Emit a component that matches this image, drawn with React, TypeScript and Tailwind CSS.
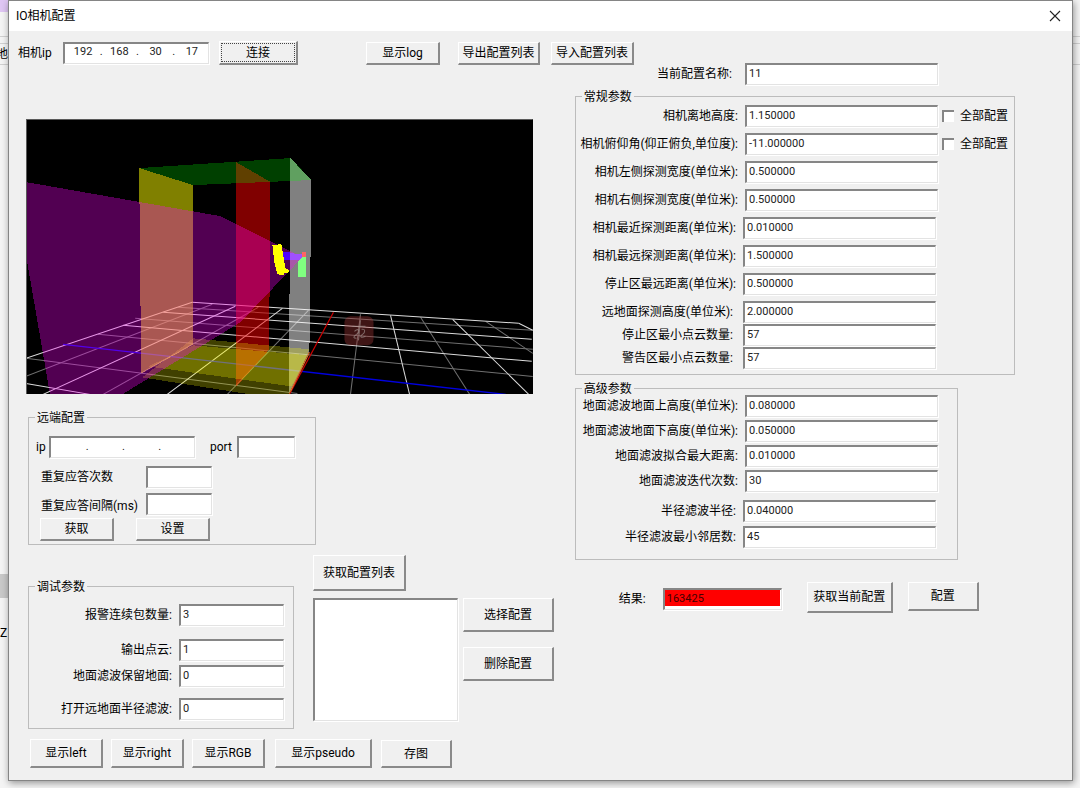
import React, { ReactNode } from 'react';
import clsx from 'clsx';

const bevelIn =
  'bg-white border-t-2 border-l-2 border-r border-b border-t-[#868686] border-l-[#868686] border-r-[#e3e3e3] border-b-[#e3e3e3] shadow-[1px_1px_0_#fff] rounded-none outline-none';

interface BevelButtonProps {
  children: ReactNode;
  className?: string;
  focused?: boolean;
}

function BevelButton({ children, className, focused }: BevelButtonProps) {
  return (
    <button
      type="button"
      className={clsx(
        'shrink-0 whitespace-nowrap bg-[#f0f0f0] p-px text-center border-t border-l border-r-2 border-b-2 border-t-white border-l-white border-r-[#8a8a8a] border-b-[#8a8a8a]',
        className
      )}
    >
      {focused ? (
        <span className="flex h-full items-center justify-center border border-dotted border-[#444]">
          {children}
        </span>
      ) : (
        children
      )}
    </button>
  );
}

interface TextBoxProps {
  id: string;
  value?: string;
  className?: string;
}

function TextBox({ id, value = '', className }: TextBoxProps) {
  return (
    <input
      id={id}
      type="text"
      defaultValue={value}
      className={clsx('h-[22px] min-w-0 pb-0.5 pl-0.5 text-[11px] text-[#222]', bevelIn, className)}
    />
  );
}

interface IpBoxProps {
  id: string;
  parts: string[];
}

function IpBox({ id, parts }: IpBoxProps) {
  return (
    <div className={clsx('flex h-[22px] w-[146px] items-center pb-0.5 pl-0.5 text-[11px] text-[#222]', bevelIn)}>
      {parts.map((part, i) => (
        <React.Fragment key={i}>
          {i > 0 && <span className="w-1 text-center">.</span>}
          <input
            id={i === 0 ? id : undefined}
            aria-label={`ip ${i + 1}`}
            type="text"
            defaultValue={part}
            className="w-0 min-w-0 flex-1 bg-transparent text-center outline-none"
          />
        </React.Fragment>
      ))}
    </div>
  );
}

interface GroupBoxProps {
  title: string;
  className?: string;
  children: ReactNode;
}

function GroupBox({ title, className, children }: GroupBoxProps) {
  return (
    <fieldset className={clsx('min-w-0 border border-[#bcbcbc]', className)}>
      <legend className="ml-1.5 h-4 px-0.5 leading-[18px]">{title}</legend>
      {children}
    </fieldset>
  );
}

interface Param {
  id: string;
  label: string;
  value: string;
  all?: boolean;
}

function ParamRow({ param, labelGap = 'pr-[7px]' }: { param: Param; labelGap?: string }) {
  return (
    <div className="flex h-[22px] items-center">
      <label htmlFor={param.id} className={clsx('flex-1 whitespace-nowrap text-right', labelGap)}>
        {param.label}
      </label>
      <TextBox id={param.id} value={param.value} className="w-[193px]" />
      <div className="flex w-[76px] items-center gap-1.5 pl-1">
        {param.all && (
          <>
            <input
              id={`${param.id}-all`}
              type="checkbox"
              className="size-3 appearance-none border-t-2 border-l-2 border-t-[#868686] border-l-[#868686] bg-white"
            />
            <label htmlFor={`${param.id}-all`}>全部配置</label>
          </>
        )}
      </div>
    </div>
  );
}

const cameraParams: Param[] = [
  { id: 'height', label: '相机离地高度:', value: '1.150000', all: true },
  { id: 'pitch', label: '相机俯仰角(仰正俯负,单位度):', value: '-11.000000', all: true },
  { id: 'left-width', label: '相机左侧探测宽度(单位米):', value: '0.500000' },
  { id: 'right-width', label: '相机右侧探测宽度(单位米):', value: '0.500000' }
];

const distanceParams: Param[] = [
  { id: 'near', label: '相机最近探测距离(单位米):', value: '0.010000' },
  { id: 'far', label: '相机最远探测距离(单位米):', value: '1.500000' },
  { id: 'stop-far', label: '停止区最远距离(单位米):', value: '0.500000' }
];

const zoneParams: Param[] = [
  { id: 'far-ground', label: '远地面探测高度(单位米):', value: '2.000000' },
  { id: 'stop-points', label: '停止区最小点云数量:', value: '57' },
  { id: 'warn-points', label: '警告区最小点云数量:', value: '57' }
];

const groundParams: Param[] = [
  { id: 'ground-up', label: '地面滤波地面上高度(单位米):', value: '0.080000' },
  { id: 'ground-down', label: '地面滤波地面下高度(单位米):', value: '0.050000' },
  { id: 'fit-distance', label: '地面滤波拟合最大距离:', value: '0.010000' },
  { id: 'iterations', label: '地面滤波迭代次数:', value: '30' }
];

const radiusParams: Param[] = [
  { id: 'radius', label: '半径滤波半径:', value: '0.040000' },
  { id: 'neighbours', label: '半径滤波最小邻居数:', value: '45' }
];

const debugParams = [
  { id: 'alarm-count', label: '报警连续包数量:', value: '3', gap: 'mt-[10px]' },
  { id: 'output-cloud', label: '输出点云:', value: '1', gap: 'mt-[13px]' },
  { id: 'keep-ground', label: '地面滤波保留地面:', value: '0', gap: 'mt-1' },
  { id: 'far-radius', label: '打开远地面半径滤波:', value: '0', gap: 'mt-[11px]' }
];

// [x1, y1, x2, y2]
const majorLines = [
  [192, 302, 518, 323],
  [163, 312, 531, 339],
  [123, 325, 531, 361],
  [26, 383, 90, 394],
  [192, 302, 26, 358],
  [235, 306, 43, 394],
  [282, 308, 167, 394],
  [390, 315, 409, 394],
  [452, 319, 528, 394],
  [518, 323, 532, 330]
];

const minorLines = [
  [178, 307, 532, 330],
  [135, 318, 532, 349],
  [98, 334, 532, 376],
  [26, 358, 297, 393],
  [212, 304, 26, 376],
  [258, 307, 103, 394],
  [308, 310, 227, 394],
  [360, 314, 350, 394],
  [420, 317, 469, 394],
  [485, 321, 532, 353]
];

function CloudView() {
  return (
    <svg viewBox="26 119 506 275" className="block w-full bg-black" role="img" aria-label="点云">
      <g strokeWidth="1">
        {minorLines.map(([x1, y1, x2, y2], i) => (
          <line key={i} x1={x1} y1={y1} x2={x2} y2={y2} stroke="#707070" />
        ))}
        {majorLines.map(([x1, y1, x2, y2], i) => (
          <line key={i} x1={x1} y1={y1} x2={x2} y2={y2} stroke="#dcdcdc" />
        ))}
        <line x1="63" y1="344" x2="505" y2="394" stroke="#0000e0" strokeWidth="1.4" />
        <line x1="333" y1="312" x2="289" y2="394" stroke="#d00000" strokeWidth="1.2" />
      </g>
      <g shapeRendering="crispEdges">
        <polygon points="139,168 193,185 193,344 141,373" fill="#ff0" fillOpacity=".5" />
        <polygon points="235.5,162 269.5,181.5 269,349 236,386" fill="#f00" fillOpacity=".5" />
        <polygon points="290,158 311,180 309,351 288.5,393" fill="#fff" fillOpacity=".5" />
        <polygon points="139,168 290.5,158 311,180 193,185" fill="#0f0" fillOpacity=".25" />
        <polygon points="193,338 309,349 289,394 250,394 142,377" fill="#ff0" fillOpacity=".25" />
        <polygon points="193,345 308,355 291,386 148,366" fill="#ff0" fillOpacity=".25" />
        <polygon
          points="26,182 220,216 302,257 240,322 122,394 50,394 26,255"
          fill="#f0f"
          fillOpacity=".32"
        />
      </g>
      <line x1="309" y1="352" x2="290" y2="391" stroke="#e07030" strokeWidth="1.2" />
      <g shapeRendering="crispEdges">
        <polygon points="280,252 290,252 290,260 284,260" fill="#5000ff" />
        <polygon points="290,253 302,254 302,260 290,260" fill="#a050ff" />
        <rect x="302" y="252" width="4" height="6" fill="#ff6464" />
        <polygon points="298,261 302,257 306,257 306,277 298,277" fill="#80ff80" />
        <polygon
          points="272,245 281,244 285,268 289,270 289,272 284,273 284,275 277,274 274,262"
          fill="#ff0"
        />
      </g>
      <rect x="344" y="316" width="29" height="29" rx="6" fill="#b03a3a" fillOpacity=".36" />
      <path
        d="M352 326h13M360 320l-2 20M354 331c4-4 6 0 2 3s-3 4 0 4M361 329c4-1 4 3 1 5s-2 4 3 2"
        fill="none"
        stroke="#9a8a88"
        strokeWidth="1"
        strokeOpacity=".7"
      />
      <path d="M26 119.5h506M26.5 119v275" stroke="#5a5a5a" fill="none" />
    </svg>
  );
}

function RemoteConfig() {
  return (
    <GroupBox title="远端配置" className="mt-[15px] ml-0.5 w-72 pb-[3px]">
      <div className="mt-[11px] flex h-[22px] items-center pl-[7px]">
        <label htmlFor="remote-ip" className="w-[13px]">ip</label>
        <IpBox id="remote-ip" parts={['', '', '', '']} />
        <label htmlFor="remote-port" className="w-[42px] pl-[15px]">port</label>
        <TextBox id="remote-port" className="w-[58px]" />
      </div>
      <div className="mt-2 flex h-[22px] items-center pl-3">
        <label htmlFor="repeat-count" className="w-[105px]">重复应答次数</label>
        <TextBox id="repeat-count" className="w-[66px]" />
      </div>
      <div className="mt-[5px] flex h-[22px] items-center pl-3">
        <label htmlFor="repeat-gap" className="w-[105px] pt-1">重复应答间隔(ms)</label>
        <TextBox id="repeat-gap" className="w-[66px]" />
      </div>
      <div className="mt-[3px] flex gap-[22px] pl-[11px]">
        <BevelButton className="h-[23px] w-[74px]">获取</BevelButton>
        <BevelButton className="h-[23px] w-[74px]">设置</BevelButton>
      </div>
    </GroupBox>
  );
}

function DebugConfig() {
  return (
    <GroupBox title="调试参数" className="mt-[23px] w-[266px] pr-[9px] pb-2">
      {debugParams.map((p) => (
        <div key={p.id} className={clsx('flex h-[22px] items-center', p.gap)}>
          <label htmlFor={p.id} className="flex-1 pr-[7px] text-right">{p.label}</label>
          <TextBox id={p.id} value={p.value} className="w-[105px]" />
        </div>
      ))}
    </GroupBox>
  );
}

function ConfigList() {
  return (
    <div className="ml-[19px]">
      <BevelButton className="h-9 w-[93px]">获取配置列表</BevelButton>
      <div className="mt-[7px] flex gap-[5px]">
        <select
          size={6}
          aria-label="配置列表"
          className={clsx('h-[123px] w-[145px] appearance-none overflow-hidden', bevelIn)}
        />
        <div className="flex flex-col gap-[15px]">
          <BevelButton className="h-[34px] w-[91px]">选择配置</BevelButton>
          <BevelButton className="h-[34px] w-[91px]">删除配置</BevelButton>
        </div>
      </div>
    </div>
  );
}

function Toolbar() {
  return (
    <div className="flex items-start pt-[10px] pl-[9px]">
      <div className="flex items-center">
        <label htmlFor="camera-ip" className="w-[45px] whitespace-nowrap">相机ip</label>
        <IpBox id="camera-ip" parts={['192', '168', '30', '17']} />
        <BevelButton focused className="ml-[10px] h-6 w-[79px]">连接</BevelButton>
        <BevelButton className="ml-[68px] h-[23px] w-[74px]">显示log</BevelButton>
        <BevelButton className="ml-[18px] h-[23px] w-[82px]">导出配置列表</BevelButton>
        <BevelButton className="ml-[11px] h-[23px] w-[83px]">导入配置列表</BevelButton>
      </div>
      <div className="mt-[22px] mr-[134px] ml-auto flex h-[22px] items-center">
        <label htmlFor="config-name" className="pr-[13px] whitespace-nowrap">当前配置名称:</label>
        <TextBox id="config-name" value="11" className="w-[193px]" />
      </div>
    </div>
  );
}

function ParamPanel() {
  return (
    <div className="pt-[3px] pl-[3px]">
      <GroupBox title="常规参数" className="mr-[57px] pt-px pb-[5px]">
        <div className="flex flex-col gap-1.5">
          {cameraParams.map((p) => <ParamRow key={p.id} param={p} />)}
        </div>
        <div className="mt-1.5 flex flex-col gap-1.5 pr-0.5">
          {distanceParams.map((p) => <ParamRow key={p.id} param={p} />)}
        </div>
        <div className="mt-1.5 flex flex-col gap-px pr-0.5">
          {zoneParams.map((p) => <ParamRow key={p.id} param={p} labelGap="pr-[10px]" />)}
        </div>
      </GroupBox>

      <GroupBox title="高级参数" className="mt-[5px] mr-[114px] pb-[11px]">
        <div className="-mt-px -mr-[57px] flex flex-col gap-[3px]">
          {groundParams.map((p) => <ParamRow key={p.id} param={p} />)}
        </div>
        <div className="mt-2 -mr-[57px] flex flex-col gap-1 pr-0.5">
          {radiusParams.map((p) => <ParamRow key={p.id} param={p} />)}
        </div>
      </GroupBox>

      <div className="mt-[22px] flex items-start pl-11">
        <div className="flex h-[34px] items-center">
          <label htmlFor="result" className="w-11">结果:</label>
          <div className={clsx('h-[22px] w-[119px] pr-px', bevelIn)}>
            <input
              id="result"
              type="text"
              readOnly
              defaultValue="163425"
              className="block h-4 w-full bg-[#f00] pl-0.5 text-[11px] text-[#400] outline-none"
            />
          </div>
        </div>
        <BevelButton className="ml-[25px] h-[31px] w-[86px]">获取当前配置</BevelButton>
        <BevelButton className="ml-[15px] h-[29px] w-[71px]">配置</BevelButton>
      </div>
    </div>
  );
}

export default function App() {
  return (
    <div className="flex min-h-screen bg-[#f4f4f4] text-xs text-black [font-family:Roboto,'Noto_Sans_CJK_SC',sans-serif]">
      <div className="flex w-2 shrink-0 flex-col overflow-hidden">
        <div className="h-3 bg-[#dfc6f3]" />
        <div className="h-[25px] border-b border-[#d0d0d0]" />
        <div className="mt-1.5 flex h-[22px] items-center justify-end border-y border-[#d0d0d0]">地</div>
        <div className="mt-[509px] h-6 bg-[#c8c8c8]" />
        <div className="mt-[27px]">Z</div>
      </div>

      <main className="z-10 mb-[7px] min-w-0 flex-1 border border-[#858585] bg-[#f0f0f0] shadow-[1px_2px_7px_rgba(0,0,0,0.4)]">
        <header className="flex h-[30px] items-center justify-between bg-white pr-[10px] pl-[7px]">
          <h1>IO相机配置</h1>
          <button type="button" aria-label="关闭" className="p-px">
            <svg viewBox="0 0 12 12" className="size-3">
              <path d="M1 1l10 10M11 1L1 11" stroke="#222" strokeWidth="1.1" fill="none" />
            </svg>
          </button>
        </header>

        <Toolbar />

        <div className="grid grid-cols-[9fr_8fr]">
          <div className="pt-[34px] pb-[11px] pl-[17px]">
            <div className="pr-[39px]">
              <CloudView />
            </div>
            <RemoteConfig />
            <div className="mt-[10px] ml-0.5 flex items-start">
              <DebugConfig />
              <ConfigList />
            </div>
            <div className="mt-[10px] flex items-end pl-1">
              <BevelButton className="h-[29px] w-[73px]">显示left</BevelButton>
              <BevelButton className="ml-2 h-[29px] w-[73px]">显示right</BevelButton>
              <BevelButton className="ml-2 h-[29px] w-[73px]">显示RGB</BevelButton>
              <BevelButton className="ml-[10px] h-[29px] w-[97px]">显示pseudo</BevelButton>
              <BevelButton className="ml-[9px] h-7 w-[71px]">存图</BevelButton>
            </div>
          </div>
          <ParamPanel />
        </div>
      </main>

      <div className="w-[7px] shrink-0">
        <div className="h-[37px] border-b border-[#d0d0d0]" />
        <div className="mt-1.5 h-[22px] border-y border-[#d0d0d0]" />
      </div>
    </div>
  );
}
